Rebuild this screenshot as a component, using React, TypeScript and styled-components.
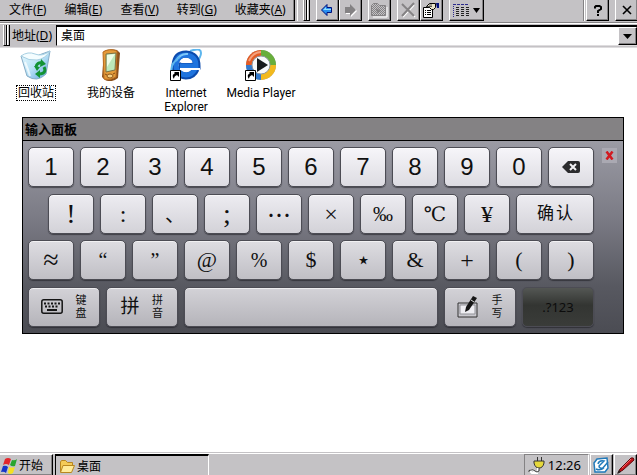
import React from "react";
import styled, { createGlobalStyle, css } from "styled-components";

const face = "#c4c2c5";
const shade = "#848284";

const GlobalStyle = createGlobalStyle`
  * { box-sizing: border-box; }
  html, body { margin: 0; background: #fff; }
  body, button, input {
    font-family: "Noto Sans", "Noto Sans CJK SC", sans-serif;
    font-size: 12px;
    line-height: 16px;
    color: #000;
  }
  button { padding: 0; border: 0; margin: 0; }
`;

const raised = css`
  background: ${face};
  border: 1px solid;
  border-color: #fff #000 #000 #fff;
  box-shadow: inset -1px -1px 0 ${shade};
`;

const Shell = styled.div`
  display: flex;
  flex-direction: column;
  height: 100vh;
  overflow: hidden;
`;

/* ---------- command bar ---------- */

const CommandBar = styled.header`
  display: flex;
  height: 23px;
  flex: none;
  background: ${face};
  border-bottom: 1px solid ${shade};
  padding-bottom: 1px;
`;

const MenuBand = styled.nav`
  display: flex;
  align-items: center;
  gap: 18px;
  height: 21px;
  padding: 0 8px 0 9px;
  border-right: 1px solid #000;
  border-bottom: 1px solid #000;
  box-shadow: inset -1px 0 0 ${shade};
`;

const MenuItem = styled.button`
  background: none;
  white-space: nowrap;
`;

const ToolBand = styled.div`
  display: flex;
  flex: 1;
  margin-left: 2px;
  padding-left: 5px;
  border-left: 1px solid #fff;
  border-right: 1px solid ${shade};
`;

const Grip = styled.span`
  width: 7px;
  flex: none;
  align-self: stretch;
  border: solid;
  border-width: 0 1px 1px;
  border-color: #fff #000 #000 #fff;
  background: linear-gradient(90deg, ${shade} 0 1px, ${face} 1px 2px, #000 2px 3px, #fff 3px 4px, ${face} 4px);
`;

const ToolGroup = styled.div`
  display: flex;
  margin-left: 6px;
`;

const ToolButton = styled.button<{ $wide?: boolean }>`
  ${raised}
  border-top: 0;
  width: ${(p) => (p.$wide ? 35 : 23)}px;
  height: 21px;
  display: flex;
  align-items: center;
  justify-content: center;
  gap: 4px;
`;

const WindowButtons = styled.div`
  display: flex;
  gap: 6px;
  padding-left: 1px;
  border-left: 1px solid #fff;
  margin-right: -1px;
`;

/* ---------- address bar ---------- */

const AddressBar = styled.div`
  display: flex;
  align-items: stretch;
  height: 25px;
  flex: none;
  padding: 1px 0 1px 3px;
  background: ${face};
  border-top: 1px solid #fff;
  border-bottom: 1px solid #dedcde;
`;

const AddressLabel = styled.label`
  padding: 3px 4px 0 2px;
  white-space: nowrap;
`;

const Combo = styled.div`
  display: flex;
  flex: 1;
  background: #fff;
  border: solid;
  border-width: 2px 0 1px 1px;
  border-color: #000 #000 #dedcde #000;
`;

const AddressInput = styled.input`
  flex: 1;
  min-width: 0;
  border: 0;
  outline: 0;
  padding: 0 4px;
  background: transparent;
`;

const DropButton = styled.button`
  ${raised}
  width: 19px;
  display: grid;
  place-items: center;
`;

/* ---------- desktop ---------- */

const Desktop = styled.main`
  flex: 1;
  min-height: 0;
  background: #fff;
`;

const Shortcuts = styled.div`
  display: flex;
  gap: 3px;
  height: 69px;
  padding-top: 1px;
`;

const Shortcut = styled.button`
  display: flex;
  flex-direction: column;
  align-items: center;
  gap: 4px;
  width: 72px;
  font-family: Roboto, "Noto Sans CJK SC", sans-serif;
  line-height: 14px;
  background: none;
  svg { flex: none; }
`;

const ShortcutName = styled.span<{ $focused?: boolean }>`
  white-space: nowrap;
  padding: 0 1px;
  border: 1px ${(p) => (p.$focused ? "dotted #000" : "solid transparent")};
`;

/* ---------- keyboard ---------- */

const Panel = styled.section`
  margin: 0 13px 0 22px;
  border: 1px solid #000;
`;

const PanelTitle = styled.h1`
  margin: 0;
  padding: 3px 2px;
  height: 23px;
  font-size: 13px;
  line-height: 16px;
  font-weight: 700;
  background: ${shade};
  border-bottom: 1px solid #000;
`;

const PanelBody = styled.div`
  display: flex;
  align-items: flex-start;
  padding: 6px 6px 6px 5px;
  background: linear-gradient(#9b9ba4, #7b7b85 40%, #585961 75%, #4b4c53);
`;

const Keys = styled.div`
  flex: 1;
  min-width: 0;
  display: flex;
  flex-direction: column;
  justify-content: space-between;
  height: 180px;
`;

const KeyRow = styled.div<{ $indent?: boolean }>`
  display: flex;
  gap: 6px;
  padding-left: ${(p) => (p.$indent ? 20 : 0)}px;
`;

const tones = [
  "linear-gradient(#f6f5f9, #dddce2)",
  "linear-gradient(#edecf1, #d3d2d8)",
  "linear-gradient(#dedde2, #c0bfc5)",
  "linear-gradient(#d3d2d7, #b5b4ba)",
];

const faces = {
  sans: '"Liberation Sans", "Noto Sans CJK SC", sans-serif',
  serif: '"Liberation Serif", "DejaVu Serif", "Noto Sans CJK SC", serif',
  cjk: '"Noto Sans CJK SC", sans-serif',
};

const Key = styled.button<{ $tone: number; $span?: number; $face?: keyof typeof faces; $size?: number; $dark?: boolean }>`
  flex: ${(p) => p.$span ?? 46} 1 ${(p) => p.$span ?? 46}px;
  min-width: 0;
  height: 40px;
  display: flex;
  align-items: center;
  justify-content: center;
  gap: 9px;
  border-radius: 5px;
  border: 1px solid #4c4c54;
  box-shadow: inset 0 1px 0 rgba(255, 255, 255, ${(p) => (p.$dark ? 0 : 0.6)}), 0 1px 1px rgba(30, 30, 36, 0.6);
  background: ${(p) => (p.$dark ? "linear-gradient(#545754, #333532 45%, #3a3c39)" : tones[p.$tone])};
  color: ${(p) => (p.$dark ? "#0c0c0c" : "#101010")};
  font-family: ${(p) => faces[p.$face ?? "sans"]};
  font-size: ${(p) => p.$size ?? 24}px;
  line-height: 28px;
`;

const ConfirmText = styled.span`
  display: flex;
  gap: 2px;
  font-size: 17px;
`;

const ModeText = styled.span`
  font-family: "Noto Sans", sans-serif;
  font-size: 13px;
`;

const Stacked = styled.span`
  width: 12px;
  margin-left: ${(p: { $far?: boolean }) => (p.$far ? 8 : 3)}px;
  font-size: 11px;
  line-height: 13px;
`;

const CloseKey = styled.button`
  width: 15px;
  height: 15px;
  margin: 1px 0 0 8px;
  display: grid;
  place-items: center;
  background: #aaa9b2;
`;

/* ---------- taskbar ---------- */

const Taskbar = styled.footer`
  display: flex;
  flex: none;
  height: 22px;
  background: ${face};
  border-top: 1px solid #fff;
  box-shadow: 0 -1px 0 ${face};
`;

const StartButton = styled.button`
  ${raised}
  border-left: 0;
  border-bottom: 0;
  width: 53px;
  padding: 1px 0 0 1px;
  display: flex;
  align-items: center;
  gap: 1px;
`;

const TaskButton = styled.button`
  display: flex;
  align-items: center;
  gap: 2px;
  width: 154px;
  margin-left: 2px;
  padding: 2px 0 0 3px;
  background: ${face};
  border: solid;
  border-width: 2px 1px 0 1px;
  border-color: #000 #fff #000 #000;
`;

const Tray = styled.div`
  display: flex;
  align-items: center;
  gap: 3px;
  margin-left: auto;
  padding: 0 7px 0 3px;
  font-size: 13px;
  border: solid;
  border-width: 1px 1px 0;
  border-color: ${shade} #fff #fff ${shade};
`;

const TrayButton = styled.button`
  ${raised}
  border-bottom: 0;
  width: 23px;
  margin-left: 1px;
  display: grid;
  place-items: center;
`;

/* ---------- icons ---------- */

const Arrow = ({ off }: { off?: boolean }) => (
  <svg width="14" height="14" viewBox="0 0 14 14">
    {off ? (
      <>
        <path d="M14 8L8 14v-3H3V6h9z" fill="#fff" />
        <path d="M13 7L7 1v3H2v6h5v3z" fill={shade} />
      </>
    ) : (
      <>
        <path d="M1.500 7L7 1.500V4.500H11.500V9.500H7V12.500z" fill="#2a8ff0" stroke="#00107c" />
        <path d="M3 7l3-3v2h5v1z" fill="#8fe0ff" />
      </>
    )}
  </svg>
);

const FolderOff = () => (
  <svg width="18" height="16" viewBox="0 0 18 16">
    <defs>
      <pattern id="dither" width="2" height="2" patternUnits="userSpaceOnUse">
        <path d="M0 0h1v1H0zM1 1h1v1H1z" fill="#848284" />
      </pattern>
    </defs>
    <path d="M3 15h14V5" fill="none" stroke="#fff" />
    <path d="M1.500 13.500v-10l2-2h4l2 2h6v10z" fill="url(#dither)" stroke="#848284" />
    <path d="M6 6l5 3-4 2z" fill="#848284" />
  </svg>
);

const DeleteOff = () => (
  <svg width="16" height="16" viewBox="0 0 16 16" fill="none">
    <path d="M3 3l12 12M14 3L3 15" stroke="#fff" strokeWidth="1.500" />
    <path d="M2 2l12 12M14 1L2 14" stroke={shade} strokeWidth="2" />
  </svg>
);

const Properties = () => (
  <svg width="18" height="17" viewBox="0 0 18 17">
    <path d="M1.500 5.500h9v10h-9z" fill="#fff" stroke="#000" />
    <path d="M3 8.500h1M5 8.500h4M3 10.500h1M5 10.500h4M3 12.500h1M5 12.500h4" stroke="#000" />
    <path d="M4.500 4.500l3-3h6v4l-2 2h-2l-2-2z" fill="#e8e4c8" stroke="#000" />
    <path d="M6 4.500h4M7 3h3" stroke="#555" />
    <path d="M14 1h3v5h-2z" fill="#00107c" />
  </svg>
);

const Views = () => (
  <svg width="16" height="15" viewBox="0 0 16 15" shapeRendering="crispEdges">
    <path d="M0 1.500h16" stroke="#2a2a8c" strokeDasharray="3 1" />
    <path d="M0.500 3v12" stroke="#2a2a8c" strokeDasharray="1 1" />
    <path d="M3 4.500h13M3 6.500h13M3 8.500h13M3 10.500h13M3 12.500h13" stroke="#222" strokeDasharray="3 2" />
  </svg>
);

const Triangle = ({ size = 7 }: { size?: number }) => (
  <svg width={size} height="5" viewBox="0 0 8 5" preserveAspectRatio="none">
    <path d="M0 0h8L4 5z" />
  </svg>
);

const Cross = () => (
  <svg width="10" height="10" viewBox="0 0 10 10">
    <path d="M1 1l8 8M9 1L1 9" stroke="#000" strokeWidth="1.600" />
  </svg>
);

const Help = () => (
  <svg width="10" height="11" viewBox="0 0 10 11" fill="none">
    <path d="M2 3.500V2l1-1h3.500L8 2v2L5 6v2" stroke="#000" strokeWidth="2" />
    <path d="M4 9h2v2H4z" fill="#000" />
  </svg>
);

const RecycleBin = () => (
  <svg width="32" height="32" viewBox="0 0 32 32">
    <defs>
      <linearGradient id="bin" x1="0" x2="1" y2="1">
        <stop stopColor="#e9faff" />
        <stop offset=".5" stopColor="#b9e2f6" />
        <stop offset="1" stopColor="#5a9fdc" />
      </linearGradient>
    </defs>
    <path d="M1 7Q10 11 19 6L30 2L26 25Q17 34 7 27z" fill="url(#bin)" stroke="#86acc6" />
    <path d="M1 7Q8 2 15 5T30 2Q25 10 17 11T1 7z" fill="#f4fdff" stroke="#a6cfe2" />
    <path d="M5 13q3 7 5 14" stroke="#fff" strokeWidth="2" fill="none" opacity=".7" />
    <g fill="none" stroke="#129333" strokeWidth="3">
      <path d="M16 18q1-5 6-4" />
      <path d="M24 18q3 6-4 7" />
    </g>
    <path d="M21 10l5 5-6 3zM20 21v8l-5-4zM14 17l6 1-3 4z" fill="#129333" />
  </svg>
);

const Device = () => (
  <svg width="32" height="32" viewBox="0 0 32 32">
    <path d="M9 2Q15-1 22 1L25 4L23 29Q17 34 10 31L7 28z" fill="#8b511d" />
    <path d="M8 3Q14-1 22 2L21 28Q15 32 9 30z" fill="#e49b3a" stroke="#bb6e20" />
    <path d="M11 5l10-1-1 17-9 2z" fill="#bce8ba" stroke="#7b7044" />
    <path d="M12 6l8-1-8 13z" fill="#effde7" />
    <ellipse cx="15" cy="27" rx="3" ry="2" fill="#f5cf83" stroke="#925817" />
    <path d="M10 25l2 1M18 25l2-1" stroke="#854b13" />
  </svg>
);

const ShortcutMark = () => (
  <>
    <path d="M.5 21.500h10v10H.5z" fill="#fff" stroke="#000" />
    <path d="M4 23h5v5l-2-2q-3 1-3 4-3-4 1-6z" fill="#000" />
  </>
);

const Explorer = () => (
  <svg width="32" height="32" viewBox="0 0 32 32" fill="none">
    <path d="M20 2Q31-2 31 4q0 4-5 10" stroke="#5db6ee" strokeWidth="2" />
    <path d="M26 20Q23 27 16 27Q5 26 5 16Q6 5 16 5Q27 6 27 17H9" stroke="#0c4bad" strokeWidth="7" />
    <path d="M25 20Q22 26 16 26Q6 25 6 16Q7 6 16 6Q26 7 26 17H10" stroke="#1f74de" strokeWidth="5" />
    <path d="M6 12Q10 4 18 5" stroke="#7cc7fa" strokeWidth="2" />
    <path d="M11 14q1-4 5-4 5 0 6 4z" fill="#fff" />
    <path d="M10 20h20" stroke="#fff" strokeWidth="2" />
    <path d="M2 25Q-1 15 10 8" stroke="#5db6ee" strokeWidth="2" />
    <ShortcutMark />
  </svg>
);

const MediaPlayer = () => (
  <svg width="32" height="32" viewBox="0 0 32 32">
    <circle cx="16" cy="16" r="15" fill="#a1a5aa" />
    <path d="M16 16V1A15 15 0 0 0 1 16z" fill="#e35b24" />
    <path d="M16 16V1A15 15 0 0 1 31 16z" fill="#68ae3c" />
    <path d="M16 16h15A15 15 0 0 1 16 31z" fill="#f2b91e" />
    <path d="M16 16H1A15 15 0 0 0 16 31z" fill="#3279cc" />
    <path d="M4 12Q8 3 16 3" fill="none" stroke="#f4a17d" strokeWidth="2" />
    <circle cx="16" cy="16" r="9" fill="#f7f9fb" stroke="#8f99a3" />
    <path d="M12 9l11 7-11 7z" fill="#161a1d" />
    <ShortcutMark />
  </svg>
);

const Backspace = () => (
  <svg width="18" height="12" viewBox="0 0 18 12">
    <path d="M6 0h10q2 0 2 2v8q0 2-2 2H6L0 6z" fill="#2b2b2d" />
    <path d="M8 3l6 6M14 3L8 9" stroke="#f1f0f4" strokeWidth="2" />
  </svg>
);

const KeyboardIcon = () => (
  <svg width="22" height="15" viewBox="0 0 22 15" fill="none" stroke="#151515">
    <rect x=".8" y=".8" width="20.400" height="13.400" rx="2" strokeWidth="1.500" />
    <path d="M3 4.500h16" strokeWidth="2" strokeDasharray="2 1.500" />
    <path d="M4 7.500h14" strokeWidth="2" strokeDasharray="2 1.500" />
    <path d="M6 11h10" strokeWidth="2" />
  </svg>
);

const Handwriting = () => (
  <svg width="22" height="24" viewBox="0 0 22 24">
    <path d="M1 8h19v14H1z" fill="#c9c8ce" stroke="#333" />
    <path d="M3 10h15v9H3z" fill="#eeedf2" stroke="#919197" />
    <path d="M16 1l4 2-8 12-4 2 1-5z" fill="#151515" />
    <path d="M14 5l3 2" stroke="#ddd" />
  </svg>
);

const Flag = () => (
  <svg width="17" height="17" viewBox="0 0 17 17">
    <path d="M4 2q3-2 6 0L8 8q-3-2-6 0z" fill="#e3262c" />
    <path d="M11 3q3 1 5-1l-2 7q-3 1-5-1z" fill="#28a52d" />
    <path d="M2 9q3-1 5 1l-2 6q-2-2-5-1z" fill="#1535c9" />
    <path d="M8 10q3 1 6 0l-2 6q-3 2-5 0z" fill="#f4e122" />
  </svg>
);

const Folder = () => (
  <svg width="16" height="15" viewBox="0 0 16 15">
    <path d="M1.500 13V3l1-1.500h4l2 2h5v3" fill="#f4cb57" stroke="#b8871f" />
    <path d="M1.500 13.500L4 6.500h11.500l-3 7z" fill="#ffeb98" stroke="#b8871f" />
  </svg>
);

const Plug = () => (
  <svg width="17" height="17" viewBox="0 0 17 17" fill="none">
    <path d="M9.500 0v4M13.500 0v4" stroke="#333" />
    <path d="M6 4h10v2q-1 5-5 5T6 6z" fill="#e5d83c" stroke="#333" />
    <path d="M10 11v3q-2 2-4 0t-4 0l2 2h6" stroke="#fff" strokeWidth="2" />
    <path d="M11 11v3q-2 2-4 0t-4-1q-3 0-2 2" stroke="#333" />
  </svg>
);

const Note = () => (
  <svg width="17" height="16" viewBox="0 0 17 16" fill="none">
    <path d="M4 2l10-1 1 10-3 4H2l-1-9z" fill="#fff" stroke="#217aba" strokeWidth="1.500" />
    <path d="M5 7q1-4 6-3L6 9q0 3 5 2M9 12l6-7M3 12q4 2 8-1" stroke="#217aba" strokeWidth="1.500" />
  </svg>
);

const Pen = () => (
  <svg width="18" height="17" viewBox="0 0 18 17">
    <path d="M1 16l2-4L14 1q3-1 3 2L6 13z" fill="#c4141b" stroke="#61090c" />
    <path d="M5 11l9-9" stroke="#f26a6c" />
    <path d="M0 17l2-4 2 2z" fill="#222" />
  </svg>
);

/* ---------- data ---------- */

const menus = [
  ["文件", "F"],
  ["编辑", "E"],
  ["查看", "V"],
  ["转到", "G"],
  ["收藏夹", "A"],
];

const shortcuts = [
  { name: "回收站", icon: <RecycleBin />, focused: true },
  { name: "我的设备", icon: <Device /> },
  { name: "Internet\nExplorer", icon: <Explorer /> },
  { name: "Media Player", icon: <MediaPlayer /> },
];

const digits = ["1", "2", "3", "4", "5", "6", "7", "8", "9", "0"];

const marks: [string, number, keyof typeof faces][] = [
  ["!", 28, "serif"],
  [":", 24, "serif"],
  ["、", 20, "cjk"],
  [";", 28, "serif"],
  ["…", 24, "cjk"],
  ["×", 24, "serif"],
  ["‰", 20, "serif"],
  ["℃", 20, "serif"],
  ["¥", 24, "serif"],
];

const symbols: [string, number][] = [
  ["≈", 28], ["“", 20], ["”", 20], ["@", 22], ["%", 20], ["$", 22], ["⋆", 24], ["&", 22], ["+", 24], ["(", 22], [")", 22],
];

export default function App() {
  return (
    <Shell>
      <GlobalStyle />
      <CommandBar>
        <MenuBand>
          {menus.map(([name, key]) => (
            <MenuItem key={key}>{name}(<u>{key}</u>)</MenuItem>
          ))}
        </MenuBand>
        <ToolBand>
          <Grip />
          <ToolGroup>
            <ToolButton aria-label="后退"><Arrow /></ToolButton>
            <ToolButton aria-label="前进"><Arrow off /></ToolButton>
          </ToolGroup>
          <ToolGroup>
            <ToolButton aria-label="向上"><FolderOff /></ToolButton>
          </ToolGroup>
          <ToolGroup>
            <ToolButton aria-label="删除"><DeleteOff /></ToolButton>
            <ToolButton aria-label="属性"><Properties /></ToolButton>
          </ToolGroup>
          <ToolGroup>
            <ToolButton $wide aria-label="视图"><Views /><Triangle /></ToolButton>
          </ToolGroup>
        </ToolBand>
        <WindowButtons>
          <ToolButton aria-label="帮助"><Help /></ToolButton>
          <ToolButton aria-label="关闭"><Cross /></ToolButton>
        </WindowButtons>
      </CommandBar>

      <AddressBar>
        <Grip />
        <AddressLabel htmlFor="address">地址(<u>D</u>)</AddressLabel>
        <Combo>
          <AddressInput id="address" defaultValue="桌面" />
          <DropButton aria-label="展开地址"><Triangle size={9} /></DropButton>
        </Combo>
      </AddressBar>

      <Desktop>
        <Shortcuts>
          {shortcuts.map((s) => (
            <Shortcut key={s.name}>
              {s.icon}
              <ShortcutName $focused={s.focused}>
                {s.name.split("\n").map((line, i) => (
                  <React.Fragment key={line}>{i > 0 && <br />}{line}</React.Fragment>
                ))}
              </ShortcutName>
            </Shortcut>
          ))}
        </Shortcuts>

        <Panel>
          <PanelTitle>输入面板</PanelTitle>
          <PanelBody>
            <Keys>
              <KeyRow>
                {digits.map((d) => <Key key={d} $tone={0}>{d}</Key>)}
                <Key $tone={0} aria-label="退格"><Backspace /></Key>
              </KeyRow>
              <KeyRow $indent>
                {marks.map(([m, size, kind]) => <Key key={m} $tone={1} $face={kind} $size={size}>{m}</Key>)}
                <Key $tone={1} $span={78}><ConfirmText><span>确</span><span>认</span></ConfirmText></Key>
              </KeyRow>
              <KeyRow>
                {symbols.map(([m, size]) => <Key key={m} $tone={2} $face="serif" $size={size}>{m}</Key>)}
              </KeyRow>
              <KeyRow>
                <Key $tone={3} $span={72}><KeyboardIcon /><Stacked>键盘</Stacked></Key>
                <Key $tone={3} $span={72} $size={19}>拼<Stacked>拼音</Stacked></Key>
                <Key $tone={3} $span={254} aria-label="空格" />
                <Key $tone={3} $span={72}><Handwriting /><Stacked>手写</Stacked></Key>
                <Key $tone={3} $span={72} $dark><ModeText>.?123</ModeText></Key>
              </KeyRow>
            </Keys>
            <CloseKey aria-label="关闭输入面板">
              <svg width="9" height="9" viewBox="0 0 9 9">
                <path d="M1.500 0.500l6 8M7.500 0.500l-6 8" stroke="#d21920" strokeWidth="2.500" />
              </svg>
            </CloseKey>
          </PanelBody>
        </Panel>
      </Desktop>

      <Taskbar>
        <StartButton><Flag />开始</StartButton>
        <TaskButton><Folder />桌面</TaskButton>
        <Tray><Plug />12:26</Tray>
        <TrayButton aria-label="桌面"><Note /></TrayButton>
        <TrayButton aria-label="手写笔"><Pen /></TrayButton>
      </Taskbar>
    </Shell>
  );
}
